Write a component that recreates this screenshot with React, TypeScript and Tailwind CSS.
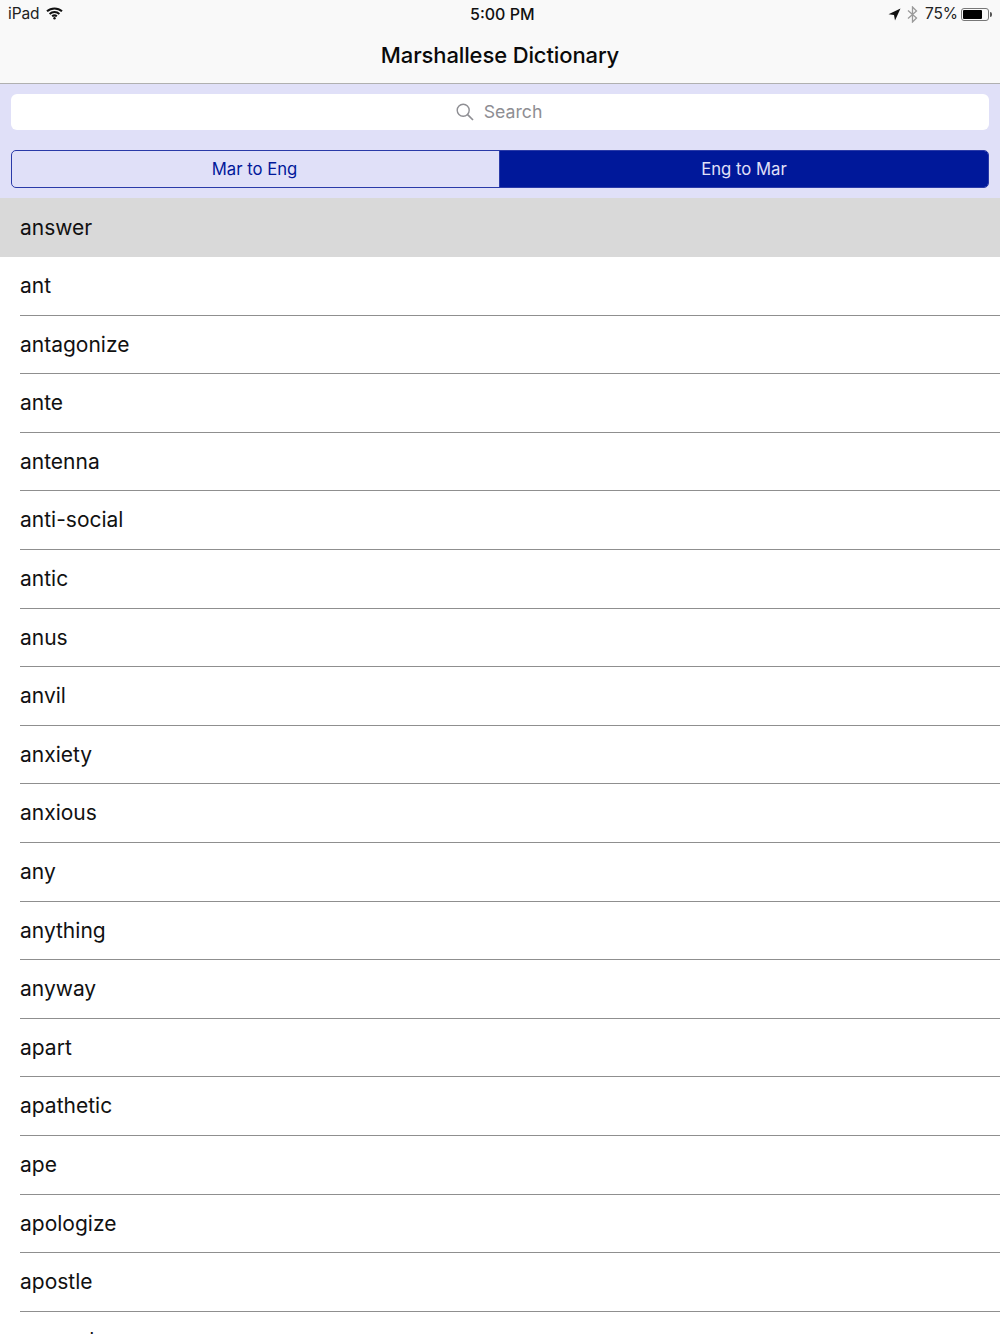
import React from "react";

const words = ["ant","antagonize","ante","antenna","anti-social","antic","anus","anvil","anxiety","anxious","any","anything","anyway","apart","apathetic","ape","apologize","apostle","apparel"];

function Wifi() {
  return (
    <svg width="17" height="13" viewBox="0 0 17 13" fill="none" stroke="#111" strokeWidth="2" className="ml-[7px] mt-[-1px]">
      <path d="M1 4.3C5.2 0.4 11.8 0.4 16 4.3" />
      <path d="M3.6 6.9C6.4 4.5 10.6 4.5 13.4 6.9" />
      <path d="M6.1 9.3C7.5 8.2 9.5 8.2 10.9 9.3" />
      <circle cx="8.5" cy="11.3" r="1.2" fill="#111" stroke="none" />
    </svg>
  );
}

function StatusRight() {
  return (
    <div className="flex items-center">
      <svg width="13" height="13" viewBox="0 0 13 13" className="mr-[6px]"><path d="M12.5 0.5L0.5 6.2L6 7L7 12.5Z" fill="#111" /></svg>
      <svg width="11" height="17" viewBox="0 0 11 17" fill="none" stroke="#9a9a9a" strokeWidth="1.3" className="mr-[7px]"><path d="M1 4.5L9.5 12L5.5 16V1L9.5 5L1 12.5" /></svg>
      <span className="text-[15.5px] text-[#222] leading-none mr-[3px] tracking-[-0.1px]">75%</span>
      <div className="w-[28px] h-[13px] border border-[#777] rounded-[3px] p-[1px]">
        <div className="w-[19px] h-full bg-black rounded-[1px]" />
      </div>
      <div className="w-[2px] h-[5px] bg-[#555] rounded-r-[2px] ml-[1px]" />
    </div>
  );
}

export default function App() {
  return (
    <div className="h-[1334px] w-[1000px] overflow-hidden bg-white font-['Inter','Liberation_Sans',sans-serif]">
      <header className="h-[84px] bg-[#f9f9f9] border-b border-[#b0b0b0] flex flex-col">
        <div className="h-[28px] px-[8px] flex items-center justify-between relative">
          <div className="flex items-center">
            <span className="text-[15.5px] text-[#222] leading-none tracking-[-0.1px]">iPad</span>
            <Wifi />
          </div>
          <span className="absolute left-[470px] top-[5px] text-[16px] font-medium text-[#111] leading-[18px]">5:00 PM</span>
          <StatusRight />
        </div>
        <h1 className="text-[22px] leading-[28px] font-medium text-[#0a0a0a] text-center mt-[13px] tracking-[-0.12px]">Marshallese Dictionary</h1>
      </header>

      <div className="bg-[#e0e0f8] h-[114px] px-[11px] pt-[10px]">
        <div className="h-[36px] bg-white rounded-[6px] flex items-center justify-center pr-[2px]">
          <svg width="18" height="18" viewBox="0 0 18 18" fill="none" stroke="#8e8e93" strokeWidth="1.4" className="mr-[10px]">
            <circle cx="7.2" cy="7.2" r="6" />
            <path d="M11.6 11.6L17 17" strokeWidth="1.7" />
          </svg>
          <span className="text-[17.7px] leading-none text-[#8e8e93]">Search</span>
        </div>
        <div className="mt-[20px] h-[38px] flex rounded-[5px] border border-[#2a3aa8] overflow-hidden">
          <div className="w-[488px] border-r border-[#2a3aa8] flex items-center justify-center text-[16.7px] pt-[1px] pr-[2px] text-[#00189a]">Mar to Eng</div>
          <div className="flex-1 flex items-center justify-center text-[16.7px] pt-[1px] text-[#e0e0f8] bg-[#00189a]">Eng to Mar</div>
        </div>
      </div>

      <div className="h-[59px] bg-[#d9d9d9] pl-[20px] flex items-center text-[21px] text-[#111]">answer</div>
      <ul>
        {words.map((w) => (
          <li key={w} className="h-[58.6px] ml-[20px] border-b border-[#8f8f8f] flex items-center text-[21px] text-[#111]">{w}</li>
        ))}
      </ul>
    </div>
  );
}
